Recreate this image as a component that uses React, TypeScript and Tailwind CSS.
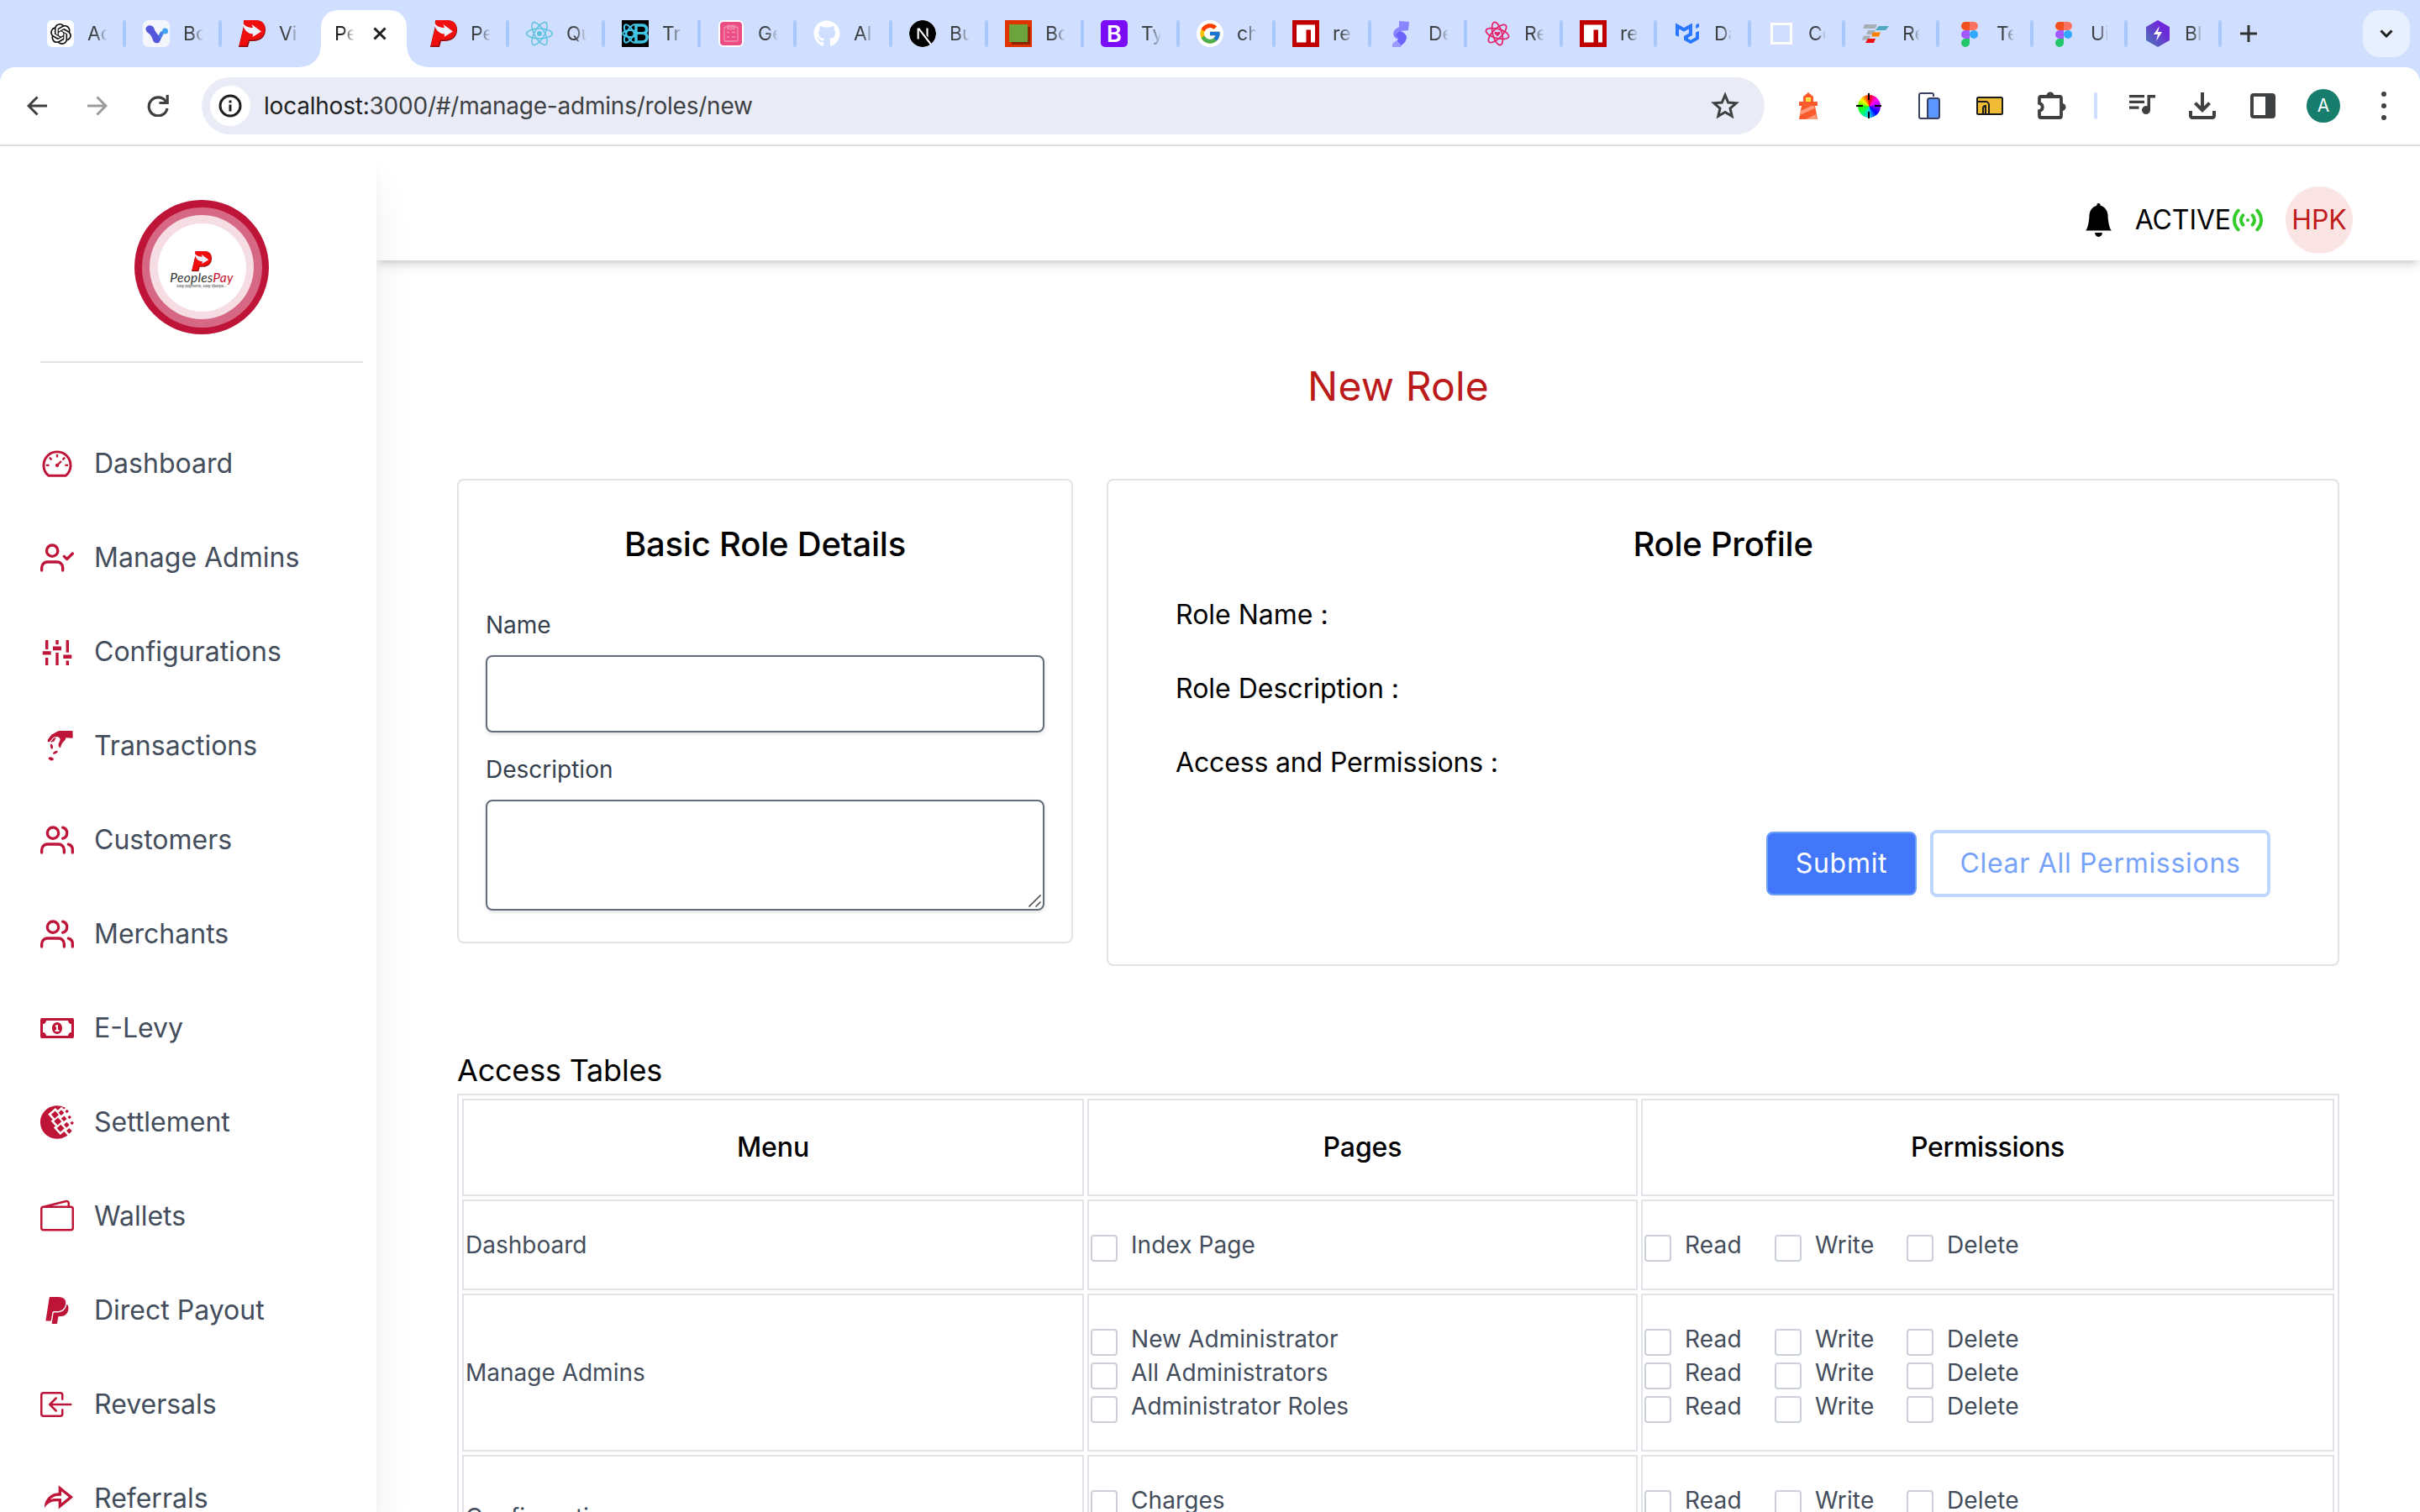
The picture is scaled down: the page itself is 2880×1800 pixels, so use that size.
import type { ReactNode } from "react";
import { AiOutlineDashboard } from "react-icons/ai";
import { BsBoxArrowInLeft, BsWallet2 } from "react-icons/bs";
import { FaGithub, FaPaypal, FaRegMoneyBillAlt } from "react-icons/fa";
import { FcGoogle } from "react-icons/fc";
import { FiUserCheck, FiUsers } from "react-icons/fi";
import { GiPayMoney } from "react-icons/gi";
import { MdOutlineFileDownload } from "react-icons/md";
import { RiShareForwardLine } from "react-icons/ri";
import { SiMui, SiNextdotjs, SiOpenai, SiReact, SiWebmoney } from "react-icons/si";
import { TbAccessPoint } from "react-icons/tb";

/* ---------- favicons ---------- */

function PeoplesPayMark({ className }: { className?: string }) {
  return (
    <svg viewBox="0 0 32 32" className={className}>
      <path d="M6 0h13c9 0 13 4.500 13 11.500C32 20 26 25 17 25h-4l-2 7H0L5.500 9z" fill="#8c0b0b" />
      <path d="M6 0h13c9 0 12.400 4 12.400 10.500C31.400 18.500 26 23.500 17 23.500h-5L9.600 30.500H.6L6 9z" fill="#f00d0d" />
      <path d="M4 3c4 4.500 8 6 13 6l-1.500-4L27 13.500 16.500 20l.8-3.600C10.500 16.500 6 11 4 3z" fill="#eef2ff" />
    </svg>
  );
}

function OpenAiFavicon() {
  return (
    <span className="flex size-8 items-center justify-center rounded-[6px] bg-white text-[#111]">
      <SiOpenai size={25} />
    </span>
  );
}

function VFavicon() {
  return (
    <svg viewBox="0 0 32 32" className="size-8">
      <rect width="32" height="32" rx="7" fill="#f5f6fc" />
      <path d="M18.500 23.500l4-8" stroke="#4a7fe6" strokeWidth="4.500" strokeLinecap="round" />
      <path d="M3.500 10.500c0-5 7.500-6 9.500-1.500 1.500 4 3 6 5.500 9 2.500 3.200 2.500 6.500 1 8.500-2 1.500-5.500 1-7-1.500-1.500-3-1.500-5.500-4.500-8.500-2.500-2-4.500-3-4.500-6z" fill="#5257dc" />
      <circle cx="26.500" cy="13" r="3.500" fill="#41a5f5" />
    </svg>
  );
}

function ReactBootstrapFavicon() {
  return (
    <svg viewBox="0 0 32 32" className="size-8">
      <rect width="32" height="32" fill="#000" />
      <g fill="none" stroke="#41c5e5" strokeWidth="2">
        <ellipse cx="10" cy="16" rx="9" ry="4" />
        <ellipse cx="10" cy="16" rx="12" ry="4.500" transform="rotate(60 10 16)" />
        <ellipse cx="10" cy="16" rx="12" ry="4.500" transform="rotate(120 10 16)" />
      </g>
      <path d="M17 6h7c7 0 7 8 2.500 9.500C32 17 31 26 24 26h-7z" fill="#000" stroke="#41c5e5" strokeWidth="3.500" />
      <path d="M17 15.500h8" stroke="#41c5e5" strokeWidth="3" />
    </svg>
  );
}

function ClipboardFavicon() {
  return (
    <svg viewBox="0 0 32 32" className="size-8">
      <rect x="1" width="30" height="32" rx="6" fill="#fff" />
      <rect x="3" y="2" width="26" height="28" rx="4" fill="#ec4d85" />
      <g fill="none" stroke="#f58fb3" strokeWidth="1.300">
        <rect x="8" y="8" width="16" height="17" rx="2" />
        <path d="M12 8.500V6.500h8v4h-8zM11 14.500h3M17 14.500h4M11 20h3M17 20h4" />
      </g>
    </svg>
  );
}

function GreenSquareFavicon() {
  return (
    <svg viewBox="0 0 32 32" className="size-8">
      <rect width="32" height="32" fill="#e03200" />
      <rect x="8" y="8" width="22" height="21" fill="#8e2300" />
      <rect x="5" y="5" width="22" height="21" fill="#6ca33c" />
    </svg>
  );
}

function BootstrapFavicon() {
  return (
    <span className="flex size-8 items-center justify-center rounded-[5px] bg-[#7a0df5] text-[27px] leading-none font-semibold text-white">
      B
    </span>
  );
}

function GoogleFavicon() {
  return (
    <span className="flex size-8 items-center justify-center rounded-full bg-white">
      <FcGoogle size={28} />
    </span>
  );
}

function NpmFavicon() {
  return (
    <svg viewBox="0 0 32 32" className="size-8">
      <rect width="32" height="32" fill="#c00000" />
      <path d="M5 5.500h22v21h-5v-15h-5.500v15H5z" fill="#fff" />
    </svg>
  );
}

function RibbonFavicon() {
  return (
    <svg viewBox="0 0 32 32" className="size-8">
      <path d="M13 1l12 1-1 10-8 1c-3 1-3 4 0 5l-4 5C4 20 4 12 13 8z" fill="#8b86ff" />
      <path d="M8 18l6-5c6 2 10 6 7 11-2 5-6 5-6 8H5c-1-6 7-6 7-10 0-2-2-3-4-4z" fill="#6a62fb" />
      <path d="M5 32c-1-5 3-6 5-8l5 5v3z" fill="#9d98ff" />
    </svg>
  );
}

function HeartAtomFavicon() {
  return (
    <svg viewBox="0 0 32 32" className="size-8">
      <g fill="none" stroke="#e6246b" strokeWidth="1.800">
        <ellipse cx="16" cy="16" rx="14" ry="5.500" transform="rotate(15 16 16)" />
        <ellipse cx="16" cy="16" rx="14" ry="5.500" transform="rotate(75 16 16)" />
        <ellipse cx="16" cy="16" rx="14" ry="5.500" transform="rotate(135 16 16)" />
      </g>
      <path d="M16 19.500l-3.200-3.200c-1.300-2.300 1.900-3.600 3.200-1.400 1.300-2.200 4.500-.9 3.200 1.400z" fill="#e6246b" />
    </svg>
  );
}

function FrameFavicon() {
  return (
    <span className="flex size-8 items-center pl-[3px]">
      <span className="size-[26px] border-[3px] border-white" />
    </span>
  );
}

function BarsFavicon() {
  return (
    <svg viewBox="0 0 32 32" className="size-8">
      <path d="M3 5h15l-2 5H1z" fill="#a7b0b5" />
      <path d="M20 7h12l-4 5H16z" fill="#4fa9c0" />
      <path d="M7 12h9l-2 5H5z" fill="#a7b0b5" />
      <path d="M2 18.500h8l-2 5H0z" fill="#a7b0b5" />
      <path d="M13 14.500h9l-2 5h-9z" fill="#ff8000" />
      <path d="M7 22h9l-2 5H4z" fill="#f01010" />
    </svg>
  );
}

function FigmaFavicon() {
  return (
    <svg viewBox="0 0 32 32" className="size-8">
      <path d="M16 2h-5a5 5 0 000 10h5z" fill="#f24e1e" />
      <path d="M16 2h5a5 5 0 010 10h-5z" fill="#ff7262" />
      <path d="M16 12h-5a5 5 0 000 10h5z" fill="#a259ff" />
      <circle cx="21" cy="17" r="5" fill="#2fa8ff" />
      <path d="M11 22h5v5a5 5 0 11-5-5z" fill="#22c76c" />
    </svg>
  );
}

function BoltFavicon() {
  return (
    <svg viewBox="0 0 32 32" className="size-8">
      <defs>
        <linearGradient id="bolt" x1="1" y1="0" x2="0" y2="1">
          <stop offset="0.300" stopColor="#6d28d9" />
          <stop offset="1" stopColor="#4b7bb5" />
        </linearGradient>
      </defs>
      <path d="M16 0l14 8v16l-14 8-14-8V8z" fill="url(#bolt)" />
      <path d="M18 7l-7 10h5l-2 8 7-11h-5z" fill="#fff" />
    </svg>
  );
}

/* ---------- tab strip ---------- */

type Tab = { title: string; icon: ReactNode };

const firstTabs: Tab[] = [
  { title: "Ac", icon: <OpenAiFavicon /> },
  { title: "Bo", icon: <VFavicon /> },
  { title: "Vi", icon: <PeoplesPayMark className="size-8" /> },
];

const middleTabs: Tab[] = [
  { title: "Pe", icon: <PeoplesPayMark className="size-8" /> },
  { title: "Qu", icon: <SiReact size={32} color="#5cc3dd" /> },
  { title: "Tr", icon: <ReactBootstrapFavicon /> },
  { title: "Ge", icon: <ClipboardFavicon /> },
  { title: "Al", icon: <FaGithub size={32} color="#fff" /> },
  { title: "Bu", icon: <SiNextdotjs size={32} color="#000" className="rounded-full bg-white" /> },
  { title: "Bo", icon: <GreenSquareFavicon /> },
  { title: "Ty", icon: <BootstrapFavicon /> },
  { title: "ch", icon: <GoogleFavicon /> },
  { title: "re", icon: <NpmFavicon /> },
  { title: "De", icon: <RibbonFavicon /> },
  { title: "Re", icon: <HeartAtomFavicon /> },
];

const lastTabs: Tab[] = [
  { title: "re", icon: <NpmFavicon /> },
  { title: "Da", icon: <SiMui size={28} color="#2a78ff" className="ml-[2px]" /> },
  { title: "Co", icon: <FrameFavicon /> },
  { title: "Re", icon: <BarsFavicon /> },
  { title: "Te", icon: <FigmaFavicon /> },
  { title: "Ui", icon: <FigmaFavicon /> },
  { title: "Bl", icon: <BoltFavicon /> },
];

function TabTitle({ children, narrow = false }: { children: ReactNode; narrow?: boolean }) {
  return (
    <span
      className={
        narrow
          ? "mr-[3px] w-5 overflow-hidden [mask-image:linear-gradient(to_right,#000_10px,transparent_21px)] whitespace-nowrap"
          : "w-[23px] overflow-hidden [mask-image:linear-gradient(to_right,#000_10px,transparent_24px)] whitespace-nowrap"
      }
    >
      {children}
    </span>
  );
}

function TabItem({ tab, divider = true, narrow = false }: { tab: Tab; divider?: boolean; narrow?: boolean }) {
  return (
    <div className={narrow ? "flex w-[112px] shrink-0 items-center" : "flex w-[114px] shrink-0 items-center"}>
      <span className="mr-4 flex size-8 shrink-0 items-center">{tab.icon}</span>
      <TabTitle narrow={narrow}>{tab.title}</TabTitle>
      {divider && <span className={narrow ? "ml-[17px] h-8 w-1 rounded-full bg-[#a8c7fa]" : "ml-[19px] h-8 w-1 rounded-full bg-[#a8c7fa]"} />}
    </div>
  );
}

function TabStrip() {
  return (
    <div className="flex h-20 items-center bg-[#d0deff] pl-14 text-[23px] text-[#3c4043]">
      {firstTabs.map((t, i) => (
        <TabItem key={i} tab={t} divider={i < 2} />
      ))}
      <div className="relative mr-7 -ml-4 flex h-[68px] w-[102px] shrink-0 items-center self-end rounded-t-[20px] bg-white pb-3 pl-4 text-[#1f1f1f]">
        <span className="absolute bottom-0 -left-6 size-6 bg-[radial-gradient(circle_at_0_0,transparent_23px,white_24px)]" />
        <span className="absolute -right-6 bottom-0 size-6 bg-[radial-gradient(circle_at_100%_0,transparent_23px,white_24px)]" />
        <TabTitle>Pe</TabTitle>
        <svg viewBox="0 0 16 16" className="ml-[23px] size-4">
          <path d="M1.500 1.500l13 13M14.500 1.500l-13 13" stroke="#1f1f1f" strokeWidth="3" />
        </svg>
      </div>
      {middleTabs.map((t, i) => (
        <TabItem key={i} tab={t} />
      ))}
      {lastTabs.map((t, i) => (
        <TabItem key={i} tab={t} narrow />
      ))}
      <svg viewBox="0 0 20 20" className="ml-[2px] size-5 shrink-0">
        <path d="M10 0v20M0 10h20" stroke="#303134" strokeWidth="3" />
      </svg>
      <span className="mr-3 ml-auto flex h-14 w-14 items-center justify-center rounded-[20px] bg-[#e8effe]">
        <svg viewBox="0 0 16 10" className="h-[10px] w-4">
          <path d="M1.500 1.500L8 8l6.500-6.500" fill="none" stroke="#1f1f1f" strokeWidth="3" />
        </svg>
      </span>
    </div>
  );
}

/* ---------- toolbar ---------- */

function ArrowIcon({ className }: { className?: string }) {
  return (
    <svg viewBox="0 0 24 24" className={className} fill="none" stroke="currentColor" strokeWidth="3">
      <path d="M24 12H2.500M12.500 1.500L2 12l10.500 10.500" />
    </svg>
  );
}

function ReloadIcon({ className }: { className?: string }) {
  return (
    <svg viewBox="0 0 26 26" className={className} fill="none" stroke="currentColor" strokeWidth="3.200">
      <path d="M22.500 8A11 11 0 1024 16" />
      <path d="M24.200 0v9.500H14.500" />
    </svg>
  );
}

function StarIcon({ className }: { className?: string }) {
  return (
    <svg viewBox="0 0 34 32" className={className} fill="none" stroke="currentColor" strokeWidth="3">
      <path d="M17 4.200l3.700 8.800 9.500.8-7.200 6.200 2.200 9.300L17 24.400l-8.200 4.900 2.200-9.300-7.200-6.200 9.500-.8z" />
    </svg>
  );
}

function PlaylistIcon({ className }: { className?: string }) {
  return (
    <svg viewBox="0 0 31 25" className={className} fill="currentColor">
      <path d="M0 1h18v3.300H0zM0 7.700h18V11H0zM0 14.400h11.500v3.300H0zM21.500 1H31v3.600h-6V19a5 5 0 11-3.500-4.800z" />
    </svg>
  );
}

function LighthouseIcon() {
  return (
    <svg viewBox="0 0 24 32" className="h-8 w-6">
      <path d="M12 0l6 5v6h5v5h-3l3 16H1l3-16H1v-5h5V5z" fill="#fb5b2c" />
      <path d="M9 6h6v5H9z" fill="#ffe14a" />
      <path d="M3 22l13-6h3l.5 3L2 27zM9 32l12-6 1 6z" fill="#ff9a7a" />
    </svg>
  );
}

function ColorWheelIcon() {
  return (
    <span className="relative flex size-[30px] items-center justify-center">
      <span className="size-[27px] rounded-full bg-[conic-gradient(#f00_0deg,#f0f_50deg,#80f_90deg,#00f_135deg,#0cf_180deg,#0f6_225deg,#3f0_270deg,#ff0_310deg,#f00_360deg)]" />
      <span className="absolute top-0 h-2 w-[2px] bg-black" />
      <span className="absolute bottom-0 h-2 w-[2px] bg-black" />
      <span className="absolute left-0 h-[2px] w-2 bg-black" />
      <span className="absolute right-0 h-[2px] w-2 bg-black" />
    </span>
  );
}

function DevicesIcon() {
  return (
    <svg viewBox="0 0 26 32" className="h-8 w-[26px]">
      <path d="M18 5V3a2 2 0 00-2-2H3a2 2 0 00-2 2v26a2 2 0 002 2h9" fill="#fff" stroke="#3a4160" strokeWidth="2" />
      <rect x="11" y="7" width="14" height="24" rx="2.500" fill="#5a96fb" stroke="#3a4160" strokeWidth="2" />
    </svg>
  );
}

function FolderIcon() {
  return (
    <svg viewBox="0 0 32 22" className="h-[22px] w-8">
      <rect x="1" y="1" width="30" height="20" rx="1.500" fill="#f0bb35" stroke="#1b1b1b" strokeWidth="2" />
      <path d="M1 6h10a4 4 0 014 4v11M8 21v-7a3 3 0 013-3v10" fill="none" stroke="#1b1b1b" strokeWidth="2" />
    </svg>
  );
}

function PuzzleIcon() {
  return (
    <svg viewBox="0 0 34 34" className="size-[34px]">
      <path
        d="M4 7h22a2 2 0 012 2v21a2 2 0 01-2 2H4a2 2 0 01-2-2v-6c5-1 5-8 0-9V9a2 2 0 012-2z"
        fill="none"
        stroke="#3f4042"
        strokeWidth="3.800"
      />
      <path d="M10.500 6a4.500 4.500 0 019 0zM29 15a4.500 4.500 0 010 9z" fill="#3f4042" />
    </svg>
  );
}

function SidePanelIcon() {
  return (
    <svg viewBox="0 0 30 30" className="size-[30px]">
      <rect x="2" y="2" width="26" height="26" rx="2" fill="none" stroke="#3f4042" strokeWidth="4" />
      <path d="M18 2h10v26H18z" fill="#3f4042" />
    </svg>
  );
}

function Toolbar() {
  return (
    <div className="bg-[#d0deff]">
      <div className="flex h-[94px] items-center rounded-t-[18px] border-b-2 border-[#dfdfdf] bg-white pl-8 text-[#3f4042]">
        <ArrowIcon className="size-6 shrink-0" />
        <ArrowIcon className="ml-12 size-6 shrink-0 rotate-180 text-[#9b9b9b]" />
        <ReloadIcon className="ml-[47px] size-[26px] shrink-0" />
        <div className="ml-[39px] flex h-[68px] w-[1860px] shrink-0 items-center rounded-full bg-[#e9ecf6] pr-[30px] pl-[10px]">
          <span className="flex size-12 items-center justify-center rounded-full bg-white">
            <svg viewBox="0 0 28 28" className="size-7">
              <circle cx="14" cy="14" r="12" fill="none" stroke="#1f1f1f" strokeWidth="3" />
              <path d="M14 12.500v8M14 7.500v3" stroke="#1f1f1f" strokeWidth="3" />
            </svg>
          </span>
          <span className="ml-4 text-[28px] tracking-[-0.220px] text-[#3d4043]">
            <span className="text-[#1f1f1f]">localhost:</span>3000/#/manage-admins/roles/new
          </span>
          <StarIcon className="mb-[2px] ml-auto h-8 w-[34px]" />
        </div>
        <div className="ml-10 flex flex-1 items-center">
          <LighthouseIcon />
          <span className="ml-[45px]"><ColorWheelIcon /></span>
          <span className="ml-[44px]"><DevicesIcon /></span>
          <span className="ml-[43px]"><FolderIcon /></span>
          <span className="mb-[3px] ml-[41px]"><PuzzleIcon /></span>
          <span className="ml-[33px] h-8 w-1 rounded-full bg-[#d0deff]" />
          <PlaylistIcon className="mb-1 ml-[38px] h-[25px] w-[31px] shrink-0" />
          <MdOutlineFileDownload size={48} className="ml-8 shrink-0" />
          <span className="ml-[33px]"><SidePanelIcon /></span>
          <span className="ml-[37px] flex size-10 items-center justify-center rounded-full bg-[#177e6d] text-[21px] text-white">A</span>
          <span className="ml-[49px] flex flex-col gap-2">
            <span className="size-[6px] rounded-full bg-[#3f4042]" />
            <span className="size-[6px] rounded-full bg-[#3f4042]" />
            <span className="size-[6px] rounded-full bg-[#3f4042]" />
          </span>
        </div>
      </div>
    </div>
  );
}

/* ---------- sidebar ---------- */

function SlidersIcon() {
  return (
    <svg viewBox="0 0 40 40" className="size-10" fill="currentColor">
      <path d="M6 6h3.400v11H6zM2.700 19.200h10v4.400h-10zM6 27h3.400v9H6z" />
      <path d="M18.300 6h3.400v5.200h-3.400zM15 13.600h10v4.600H15zM18.300 21h3.400v15h-3.400z" />
      <path d="M30.600 6H34v14.700h-3.400zM27.300 23.400h10V28h-10zM30.600 30.500H34V36h-3.400z" />
    </svg>
  );
}

const navItems: { label: string; icon: ReactNode }[] = [
  { label: "Dashboard", icon: <AiOutlineDashboard size={40} /> },
  { label: "Manage Admins", icon: <FiUserCheck size={40} /> },
  { label: "Configurations", icon: <SlidersIcon /> },
  { label: "Transactions", icon: <GiPayMoney size={40} /> },
  { label: "Customers", icon: <FiUsers size={40} /> },
  { label: "Merchants", icon: <FiUsers size={40} /> },
  { label: "E-Levy", icon: <FaRegMoneyBillAlt size={40} /> },
  { label: "Settlement", icon: <SiWebmoney size={40} /> },
  { label: "Wallets", icon: <BsWallet2 size={40} /> },
  { label: "Direct Payout", icon: <FaPaypal size={36} className="mx-auto" /> },
  { label: "Reversals", icon: <BsBoxArrowInLeft size={40} /> },
  { label: "Referrals", icon: <RiShareForwardLine size={40} /> },
];

function Sidebar() {
  return (
    <aside className="relative z-10 flex h-full w-[448px] shrink-0 flex-col bg-white pt-16 shadow-[0_40px_50px_-10px_rgba(0,0,0,0.1),0_16px_20px_-12px_rgba(0,0,0,0.1)]">
      <div className="ml-40 flex size-40 shrink-0 items-center justify-center rounded-full bg-[#be1438]">
        <div className="flex size-[143px] items-center justify-center rounded-full bg-[#d76885]">
          <div className="flex size-[124px] items-center justify-center rounded-full bg-[#f6dde3]">
            <div className="flex size-[105px] flex-col items-center rounded-full bg-white pt-[33px]">
              <PeoplesPayMark className="size-6" />
              <p className="font-[Lato] text-[15.5px] leading-[15px] tracking-[0.3px] whitespace-nowrap text-[#333] italic">
                Peoples<span className="text-[#c8102e]">Pay</span>
              </p>
              <p className="text-[4px] leading-[6px] whitespace-nowrap text-[#222] italic">Easy payments, Easy lifestyle...</p>
            </div>
          </div>
        </div>
      </div>
      <div className="mt-8 ml-12 h-[2px] w-96 shrink-0 bg-[#e2e3e8]" />
      <nav className="mt-16">
        {navItems.map((item) => (
          <a key={item.label} className="flex h-28 items-center gap-6 pl-12 text-[32px] text-[#434d5b]">
            <span className="flex size-10 items-center text-[#be1438]">{item.icon}</span>
            {item.label}
          </a>
        ))}
      </nav>
    </aside>
  );
}

/* ---------- page ---------- */

function Header() {
  return (
    <header className="flex h-[136px] shrink-0 items-start justify-end bg-white pt-12 pr-20 shadow-[0_8px_12px_-2px_rgba(0,0,0,0.13),0_4px_8px_-4px_rgba(0,0,0,0.13)]">
      <div className="flex h-20 items-center text-[32px] text-black">
        <svg viewBox="1 0 14 16" preserveAspectRatio="none" className="h-10 w-[31px]">
          <path d="M8 16a2 2 0 002-2H6a2 2 0 002 2zm.995-14.901a1 1 0 10-1.990 0A5 5 0 003 6c0 1.098-.5 6-2 7h14c-1.500-1-2-5.902-2-7 0-2.420-1.720-4.440-4.005-4.901z" />
        </svg>
        <span className="ml-7 tracking-[-0.1px]">ACTIVE</span>
        <TbAccessPoint size={48} color="#35cc2b" className="-ml-[4px]" />
        <span className="ml-[21px] flex size-20 items-center justify-center rounded-full bg-[#fbe4e4] text-[#bf1b1b]">HPK</span>
      </div>
    </header>
  );
}

function BasicDetailsCard() {
  return (
    <section className="flex h-[553px] w-[733px] flex-col rounded-lg border-2 border-[#e2e3e9] px-8 pt-12">
      <h2 className="text-center text-[40px] leading-[56px] font-medium tracking-[-0.2px] text-black">Basic Role Details</h2>
      <label className="mt-12 text-[28px] leading-10 text-[#353f4e]">Name</label>
      <input className="mt-4 h-[92px] rounded-lg border-2 border-[#626b7a] shadow-[0_2px_4px_rgba(0,0,0,0.12)] outline-none" />
      <label className="mt-6 text-[28px] leading-10 text-[#353f4e]">Description</label>
      <div className="relative mt-4 h-[132px]">
        <textarea className="h-full w-full resize-none rounded-lg border-2 border-[#626b7a] shadow-[0_2px_4px_rgba(0,0,0,0.12)] outline-none" />
        <svg viewBox="0 0 15 15" className="absolute right-1 bottom-1 size-[15px]">
          <path d="M.5 14.500l14-14M8.500 14.500l6-6" stroke="#555" strokeWidth="1.600" />
        </svg>
      </div>
    </section>
  );
}

function RoleProfileCard() {
  return (
    <section className="flex h-[580px] w-[1467px] flex-col rounded-lg border-2 border-[#e2e3e9] px-20 pt-12">
      <h2 className="text-center text-[40px] leading-[56px] font-medium tracking-[-0.25px] text-black">Role Profile</h2>
      <div className="mt-8 flex flex-col gap-10 text-[32px] leading-[48px] text-black">
        <p>Role Name :</p>
        <p>Role Description :</p>
        <p className="tracking-[-0.15px]">Access and Permissions :</p>
      </div>
      <div className="mt-14 flex items-center justify-end gap-4 text-[32px] tracking-[0.7px]">
        <button className="h-[76px] w-[179px] rounded-lg border-2 border-[#6ea0fa] bg-[#4377fa] text-white">Submit</button>
        <button className="h-20 w-[405px] rounded-lg border-4 border-[#bdd7fd] bg-white text-[#76a3f9]">Clear All Permissions</button>
      </div>
    </section>
  );
}

const accessRows = [
  { menu: "Dashboard", pages: ["Index Page"] },
  { menu: "Manage Admins", pages: ["New Administrator", "All Administrators", "Administrator Roles"] },
  { menu: "Configurations", pages: ["Charges", "Limits"] },
];

function Check({ label, className }: { label: string; className?: string }) {
  return (
    <label className={className}>
      <input type="checkbox" className="mt-2 mr-4 size-8 shrink-0 appearance-none rounded-[4px] border-2 border-[#cbd0d9] bg-white" />
      {label}
    </label>
  );
}

function AccessTable() {
  return (
    <table className="w-[2240px] table-fixed border-separate border-spacing-1 border-2 border-[#e2e3e9]">
      <colgroup>
        <col className="w-[740px]" />
        <col className="w-[655px]" />
        <col />
      </colgroup>
      <thead>
        <tr className="text-[32px] leading-[48px] text-black">
          <th className="border-2 border-[#e2e3e9] px-[2px] py-8 font-medium tracking-[-0.1px]">Menu</th>
          <th className="border-2 border-[#e2e3e9] px-[2px] py-8 font-medium tracking-[-0.1px]">Pages</th>
          <th className="border-2 border-[#e2e3e9] px-[2px] py-8 font-medium tracking-[-0.35px]">Permissions</th>
        </tr>
      </thead>
      <tbody className="text-[28px] leading-10 text-[#434d5b]">
        {accessRows.map((row) => (
          <tr key={row.menu}>
            <td className="border-2 border-[#e2e3e9] px-[2px] py-8">{row.menu}</td>
            <td className="border-2 border-[#e2e3e9] px-[2px] py-8">
              {row.pages.map((page) => (
                <Check key={page} label={page} className="flex h-10 items-start tracking-[0.080px]" />
              ))}
            </td>
            <td className="border-2 border-[#e2e3e9] px-[2px] py-8">
              {row.pages.map((page) => (
                <div key={page} className="flex h-10 items-start tracking-[0.150px]">
                  <Check label="Read" className="flex w-[155px] items-start" />
                  <Check label="Write" className="flex w-[157px] items-start" />
                  <Check label="Delete" className="flex items-start" />
                </div>
              ))}
            </td>
          </tr>
        ))}
      </tbody>
    </table>
  );
}

export default function App() {
  return (
    <div className="flex h-[1800px] w-[2880px] flex-col overflow-hidden bg-white font-['Inter','Liberation_Sans',sans-serif]">
      <TabStrip />
      <Toolbar />
      <div className="flex min-h-0 flex-1 overflow-hidden">
        <Sidebar />
        <main className="flex min-w-0 flex-1 flex-col">
          <Header />
          <div className="px-24">
            <h1 className="mt-[118px] text-center text-[48px] leading-[64px] tracking-[0.150px] text-[#bb1a1a]">New Role</h1>
            <div className="mt-[78px] flex items-start justify-between">
              <BasicDetailsCard />
              <RoleProfileCard />
            </div>
            <p className="mt-24 text-[36px] leading-[56px] tracking-[-0.2px] text-black">Access Tables</p>
            <AccessTable />
          </div>
        </main>
      </div>
    </div>
  );
}
